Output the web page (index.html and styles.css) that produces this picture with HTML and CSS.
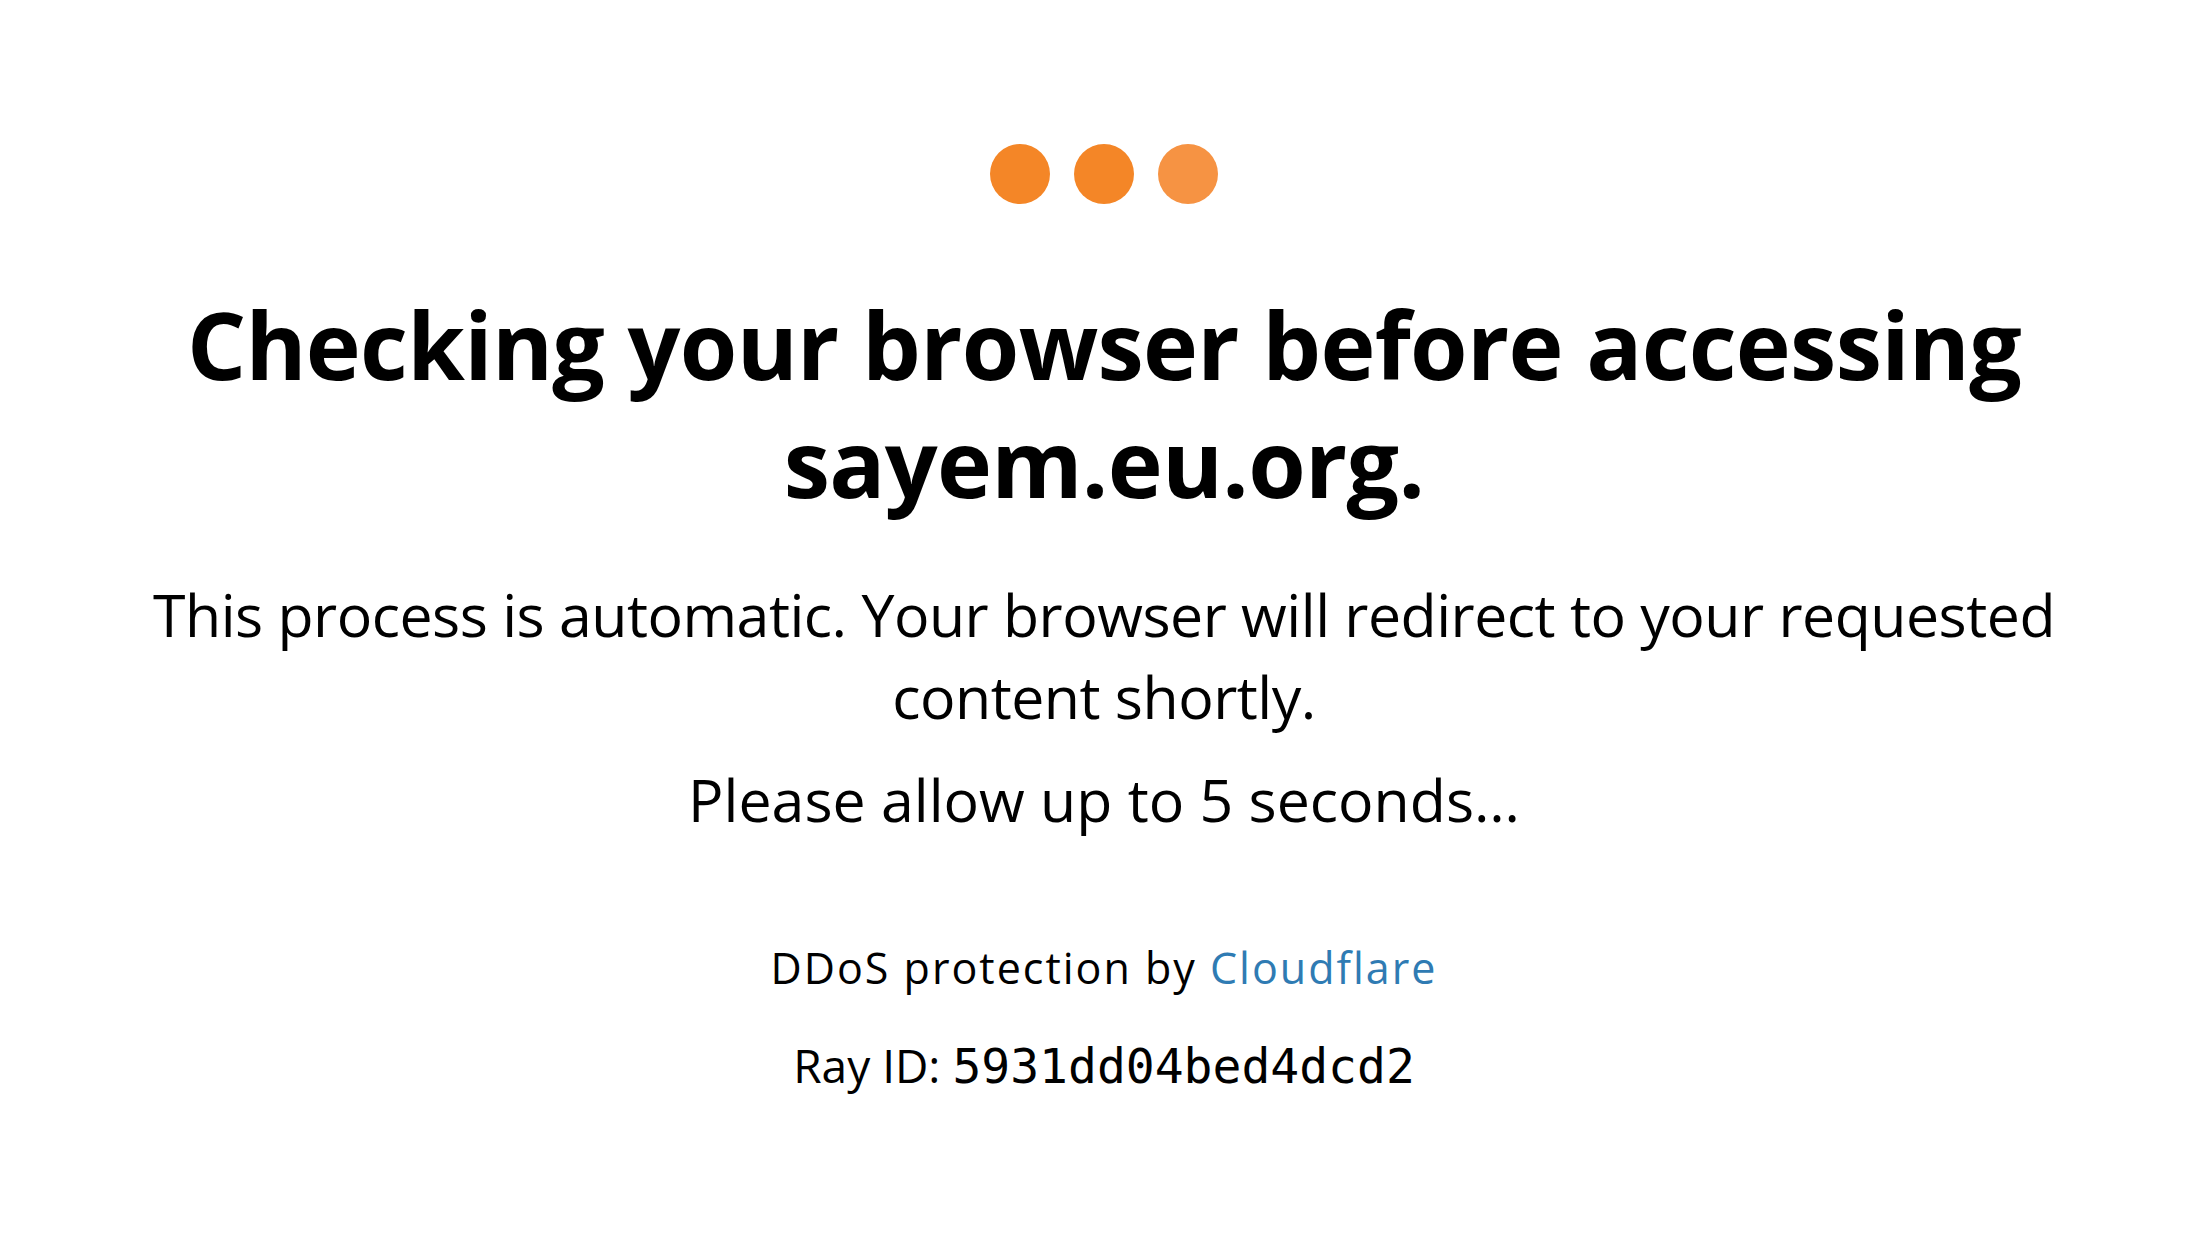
FILE: index.html
```html
<!DOCTYPE html>
<html lang="en">
<head>
<meta charset="utf-8">
<title>Just a moment...</title>
<link rel="stylesheet" href="styles.css">
</head>
<body>
<div class="wrapper">
  <div class="dots">
    <span class="dot"></span>
    <span class="dot"></span>
    <span class="dot dot-light"></span>
  </div>
  <h1 class="title">Checking your browser before accessing sayem.eu.org.</h1>
  <p class="lead">This process is automatic. Your browser will redirect to your requested content shortly.</p>
  <p class="lead wait">Please allow up to 5 seconds…</p>
  <div class="footer">
    <p class="attribution">DDoS protection by <a class="cf-link" href="#">Cloudflare</a></p>
    <p class="ray">Ray ID: <code class="ray-id">5931dd04bed4dcd2</code></p>
  </div>
</div>
</body>
</html>
```
FILE: styles.css
```css
html, body {
  margin: 0;
  padding: 0;
  background: #ffffff;
}
body {
  font-family: "Open Sans", "Noto Sans", sans-serif;
  color: #000;
}
.wrapper {
  display: flex;
  flex-direction: column;
  align-items: center;
  text-align: center;
  padding: 144px 130px 0;
}
.dots {
  display: flex;
  gap: 24px;
  height: 60px;
}
.dot {
  width: 60px;
  height: 60px;
  border-radius: 50%;
  background: #f48627;
}
.dot-light {
  background: #f69343;
}
.title {
  margin: 81px 0 0;
  font-size: 93px;
  font-weight: 700;
  line-height: 118px;
  letter-spacing: -0.7px;
}
.lead {
  margin: 52px 0 0;
  font-size: 59px;
  line-height: 82px;
  font-weight: 400;
  letter-spacing: -0.5px;
}
.wait {
  margin-top: 21px;
  letter-spacing: 0;
}
.footer {
  margin-top: 98px;
  display: flex;
  flex-direction: column;
  align-items: center;
  gap: 37px;
}
.attribution, .ray {
  margin: 0;
  line-height: 60px;
}
.attribution {
  font-size: 43px;
  letter-spacing: 2px;
}
.ray {
  font-size: 46px;
}
.cf-link {
  color: #2f7bb3;
  text-decoration: none;
}
.ray-id {
  font-family: "DejaVu Sans Mono", monospace;
  font-size: 48px;
  line-height: 60px;
}
```
